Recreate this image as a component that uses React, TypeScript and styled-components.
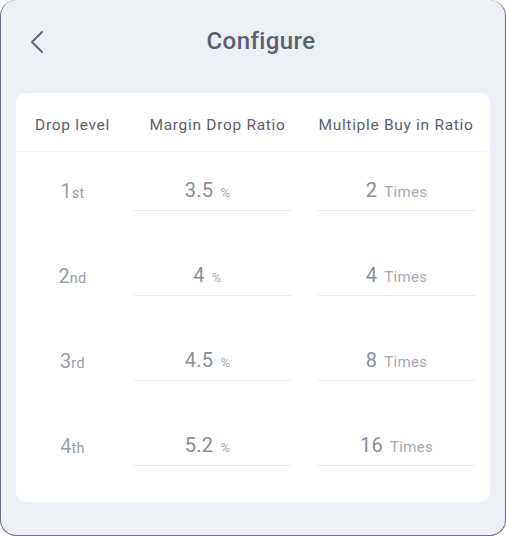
import React from "react";
import styled, { createGlobalStyle } from "styled-components";

const Global = createGlobalStyle`
  html, body { margin: 0; padding: 0; background: #ffffff; }
  body { font-family: Roboto, "Noto Sans", "Liberation Sans", sans-serif; }
  * { box-sizing: border-box; }
`;

const Frame = styled.div`
  width: 506px;
  height: 536px;
  background: #eceff4;
  border: 1px solid #6f6a86;
  border-top: none;
  border-radius: 16px;
  display: flex;
  flex-direction: column;
  padding: 0 15px 33px 15px;
`;

const TopBar = styled.div`
  height: 94px;
  display: grid;
  grid-template-columns: 40px 1fr 40px;
  align-items: start;
  padding-top: 26px;
`;

const Back = styled.button`
  background: none;
  border: none;
  padding: 0;
  margin: 4px 0 0 13px;
  width: 16px;
  height: 24px;
  cursor: pointer;
  display: flex;
`;

const Title = styled.h1`
  margin: 0;
  text-align: center;
  font-size: 24px;
  font-weight: 500;
  letter-spacing: 0.4px;
  color: #5c6170;
  line-height: 30px;
  padding-left: 16px;
`;

const Card = styled.div`
  flex: 1;
  background: #ffffff;
  border-radius: 10px;
  padding-bottom: 10px;
`;

const HeaderRow = styled.div`
  height: 59px;
  display: grid;
  grid-template-columns: 113px 177px 1fr;
  padding-right: 4px;
  align-items: center;
  border-bottom: 1px solid #f2f3f6;
  padding-top: 5px;
`;

const HeaderCell = styled.div`
  text-align: center;
  font-size: 15.5px;
  letter-spacing: 0.7px;
  color: #5b606c;
  white-space: nowrap;
`;

const Row = styled.div`
  height: 85px;
  display: grid;
  grid-template-columns: 118px 184px 157px;
  align-items: start;
`;

const Level = styled.div`
  padding-right: 5px;
  padding-top: 27px;
  text-align: center;
  color: #9a9ea8;
  line-height: 24px;
`;

const LevelNum = styled.span`
  font-size: 20px;
`;

const LevelSuffix = styled.span`
  font-size: 14.5px;
  letter-spacing: 0.3px;
`;

const Field = styled.div<{ $shift?: number }>`
  width: 157px;
  height: 59px;
  padding-top: 26px;
  border-bottom: 1.5px solid #e8eaee;
  text-align: center;
  line-height: 24px;
  white-space: nowrap;
  padding-right: ${(p) => p.$shift ?? 0}px;
`;

const Value = styled.span`
  font-size: 20px;
  color: #8a8e98;
  letter-spacing: 0.3px;
`;

const Unit = styled.span<{ $small?: boolean }>`
  font-size: ${(p) => (p.$small ? 13 : 15)}px;
  color: #a6aab3;
  margin-left: 7px;
  letter-spacing: 0.3px;
`;

const rows = [
  { n: "1", s: "st", pct: "3.5", times: "2" },
  { n: "2", s: "nd", pct: "4", times: "4" },
  { n: "3", s: "rd", pct: "4.5", times: "8" },
  { n: "4", s: "th", pct: "5.2", times: "16" },
];

export default function App() {
  return (
    <>
      <Global />
      <Frame>
        <TopBar>
          <Back aria-label="Back">
            <svg width="16" height="24" viewBox="0 0 16 24" fill="none">
              <path d="M13 2 L3 12 L13 22" stroke="#5c6170" strokeWidth="1.8" strokeLinecap="round" strokeLinejoin="round" />
            </svg>
          </Back>
          <Title>Configure</Title>
          <div />
        </TopBar>
        <Card>
          <HeaderRow>
            <HeaderCell>Drop level</HeaderCell>
            <HeaderCell>Margin Drop Ratio</HeaderCell>
            <HeaderCell>Multiple Buy in Ratio</HeaderCell>
          </HeaderRow>
          {rows.map((r) => (
            <Row key={r.n}>
              <Level>
                <LevelNum>{r.n}</LevelNum>
                <LevelSuffix>{r.s}</LevelSuffix>
              </Level>
              <Field $shift={10}>
                <Value>{r.pct}</Value>
                <Unit $small>%</Unit>
              </Field>
              <Field>
                <Value>{r.times}</Value>
                <Unit>Times</Unit>
              </Field>
            </Row>
          ))}
        </Card>
      </Frame>
    </>
  );
}
